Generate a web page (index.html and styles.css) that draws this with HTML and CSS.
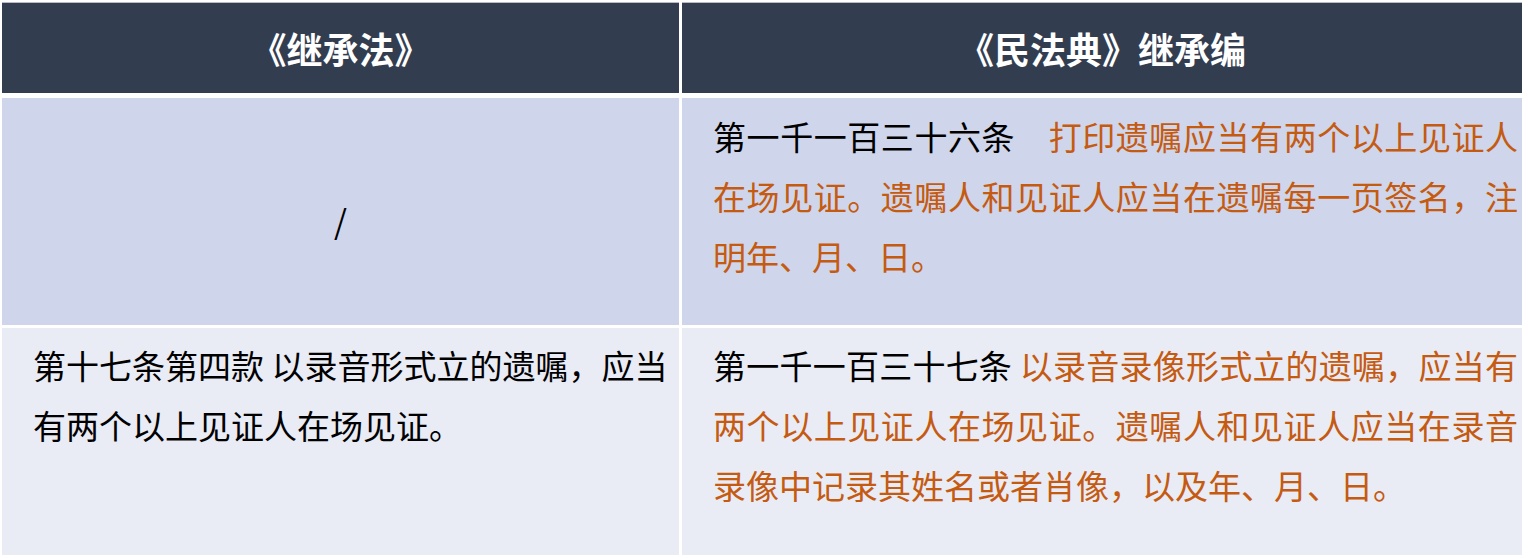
FILE: index.html
```html
<!DOCTYPE html>
<html lang="zh-CN">
<head>
<meta charset="utf-8">
<title>继承法对照</title>
<link rel="stylesheet" href="styles.css">
</head>
<body>
<div class="table">
  <div class="cell head">《继承法》</div>
  <div class="cell head">《民法典》继承编</div>

  <div class="cell r1 center">/</div>
  <div class="cell r1 text"><span class="k">第一千一百三十六条</span>　<span class="o">打印遗嘱应当有两个以上见证人在场见证。遗嘱人和见证人应当在遗嘱每一页签名，注明年、月、日。</span></div>

  <div class="cell r2 text left">第十七条第四款 以录音形式立的遗嘱，应当有两个以上见证人在场见证。</div>
  <div class="cell r2 text"><span class="k">第一千一百三十七条</span> <span class="o">以录音录像形式立的遗嘱，应当有两个以上见证人在场见证。遗嘱人和见证人应当在录音录像中记录其姓名或者肖像，以及年、月、日。</span></div>
</div>
</body>
</html>
```

FILE: styles.css
```css
html, body {
  margin: 0;
  padding: 0;
  background: #ffffff;
}

body {
  padding: 2px 0 0 2px;
  font-family: "Noto Sans CJK SC", "Noto Sans", sans-serif;
}

.table {
  display: grid;
  grid-template-columns: 677px 840px;
  grid-template-rows: 93px 227px 227px;
  column-gap: 3px;
  row-gap: 3px;
  width: 1520px;
}

.cell {
  box-sizing: border-box;
}

.head {
  background: #333d50;
  color: #ffffff;
  font-weight: bold;
  font-size: 36px;
  display: flex;
  align-items: center;
  justify-content: center;
  border-top: 1px solid #b9bcc2;
  margin-bottom: 2px;
}

.r1 {
  background: #cfd5ea;
}

.r2 {
  background: #e9ebf5;
}

.center {
  display: flex;
  align-items: center;
  justify-content: center;
  font-size: 33px;
  color: #000;
  padding-top: 16px;
}

.text {
  font-size: 33px;
  line-height: 60px;
  color: #000;
  padding: 8px 4px 0 31px;
  text-align: justify;
}

.text.left {
  text-align: left;
}

.r2.text {
  padding-top: 7px;
}

.o {
  color: #c55a11;
}
```
